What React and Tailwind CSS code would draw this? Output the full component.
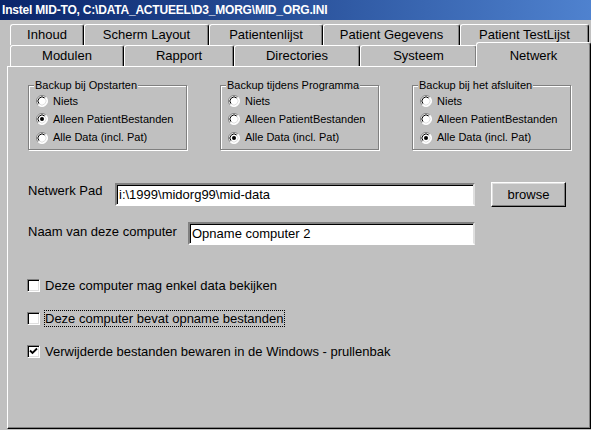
import React from "react";

const row1 = [
  { label: "Inhoud", w: "w-[74px]" },
  { label: "Scherm Layout", w: "w-[125px]" },
  { label: "Patientenlijst", w: "w-[114px]" },
  { label: "Patient Gegevens", w: "w-[137px]" },
  { label: "Patient TestLijst", w: "w-[129px]" },
];

const row2 = [
  { label: "Modulen", w: "w-[114px]" },
  { label: "Rapport", w: "w-[110px]" },
  { label: "Directories", w: "w-[126px]" },
  { label: "Systeem", w: "w-[117px]" },
];

const groups = [
  { title: "Backup bij Opstarten", checked: 1 },
  { title: "Backup tijdens Programma", checked: 2 },
  { title: "Backup bij het afsluiten", checked: 2 },
];

const options = ["Niets", "Alleen PatientBestanden", "Alle Data (incl. Pat)"];

function Tab({ label, w }) {
  return (
    <div
      className={`${w} h-[21px] flex items-center justify-center text-[13px] text-black border-t border-l border-r border-t-white border-l-white border-r-black rounded-t-[3px] shadow-[inset_-1px_0_0_#808080] bg-[#c0c0c0]`}
    >
      {label}
    </div>
  );
}

function Radio({ on }) {
  return (
    <svg width="12" height="12" viewBox="0 0 12 12" className="shrink-0">
      <circle cx="6" cy="6" r="5.5" fill="#fff" />
      <path d="M2.11 9.89A5.5 5.5 0 0 1 9.89 2.11" fill="none" stroke="#808080" strokeWidth="1" />
      <path d="M9.89 2.11A5.5 5.5 0 0 1 2.11 9.89" fill="none" stroke="#fff" strokeWidth="1" />
      <path d="M3.17 8.83A4 4 0 0 1 8.83 3.17" fill="none" stroke="#000" strokeWidth="1" />
      <path d="M8.83 3.17A4 4 0 0 1 3.17 8.83" fill="none" stroke="#dfdfdf" strokeWidth="1" />
      {on && <circle cx="6" cy="6" r="2" fill="#000" />}
    </svg>
  );
}

function Checkbox({ on }) {
  return (
    <div className="w-[13px] h-[13px] shrink-0 bg-white border border-t-[#808080] border-l-[#808080] border-b-white border-r-white shadow-[inset_1px_1px_0_#000,inset_-1px_-1px_0_#dfdfdf] flex items-center justify-center">
      {on && (
        <svg width="9" height="9" viewBox="0 0 9 9">
          <path d="M1 3.5 L3.5 6 L8 1.5" fill="none" stroke="#000" strokeWidth="1.8" />
        </svg>
      )}
    </div>
  );
}

function GroupBox({ title, checked }) {
  return (
    <div className="relative w-[159px] h-[65px] border border-[#808080] shadow-[inset_1px_1px_0_#fff,1px_1px_0_#fff] pt-[6px] pl-[7px]">
      <span className="absolute -top-[8px] left-[5px] px-[1px] bg-[#c0c0c0] text-[11px] leading-[14px]">
        {title}
      </span>
      {options.map((o, i) => (
        <div key={o} className={`flex items-center gap-[5px] ${i === 2 ? "h-[19px]" : "h-[18px]"} text-[11px]`}>
          <Radio on={i === checked} />
          <span>{o}</span>
        </div>
      ))}
    </div>
  );
}

function TextBox({ value, w }) {
  return (
    <div
      className={`${w} h-[23px] bg-white border-2 border-t-[#808080] border-l-[#808080] border-b-white border-r-[#dfdfdf] shadow-[inset_1px_1px_0_#000] flex items-center pl-[2px] text-[13px] leading-none`}
    >
      {value}
    </div>
  );
}

export default function App() {
  return (
    <div className="w-[591px] h-[430px] bg-[#c0c0c0] overflow-hidden flex flex-col font-['Liberation_Sans',Arial,sans-serif] text-black">
      {/* title bar */}
      <div className="h-[20px] shrink-0 bg-gradient-to-r from-[#0a246a] to-[#4f82cf] flex items-center pl-[2px] text-white font-bold text-[12px] tracking-[-0.2px]">
        Instel MID-TO, C:\DATA_ACTUEEL\D3_MORG\MID_ORG.INI
      </div>

      {/* tabs */}
      <div className="pt-[4px] pl-[10px]">
        <div className="flex">
          {row1.map((t) => (
            <Tab key={t.label} {...t} />
          ))}
        </div>
        <div className="flex items-end h-[21px]">
          {row2.map((t) => (
            <Tab key={t.label} {...t} />
          ))}
          <div className="relative z-10 w-[115px] h-[25px] -mb-[1px] -ml-[1px] bg-[#c0c0c0] border-t border-l border-r border-t-white border-l-white border-r-black rounded-t-[3px] shadow-[inset_-1px_0_0_#808080] flex justify-center pt-[3px] text-[13px]">
            Netwerk
          </div>
        </div>
      </div>

      {/* panel */}
      <div className="ml-[7px] w-[584px] h-[363px] border border-t-white border-l-white border-r-black border-b-black shadow-[inset_-1px_-1px_0_#808080] pl-[20px]">
        <div className="flex gap-[33px] mt-[18px]">
          {groups.map((g) => (
            <GroupBox key={g.title} {...g} />
          ))}
        </div>

        <div className="flex items-start mt-[32px] h-[25px] text-[13px]">
          <span className="w-[87px] leading-[15px] mt-[1px]">Netwerk Pad</span>
          <div className="mt-[1px]">
            <TextBox value="i:\1999\midorg99\mid-data" w="w-[360px]" />
          </div>
          <button className="ml-[16px] w-[75px] h-[25px] bg-[#c0c0c0] border border-t-white border-l-white border-r-black border-b-black shadow-[inset_-1px_-1px_0_#808080,inset_1px_1px_0_#dfdfdf] text-[13px]">
            browse
          </button>
        </div>

        <div className="flex items-start mt-[15px] text-[13px]">
          <span className="w-[160px] leading-[15px] mt-[2px]">Naam van deze computer</span>
          <TextBox value="Opname computer 2" w="w-[287px]" />
        </div>

        <div className="flex flex-col gap-[16px] mt-[32px] -ml-[1px] text-[13px]">
          {[
            { t: "Deze computer mag enkel data bekijken", on: false, focus: false },
            { t: "Deze computer bevat opname bestanden", on: false, focus: true },
            { t: "Verwijderde bestanden bewaren in de Windows - prullenbak", on: true, focus: false },
          ].map((c) => (
            <div key={c.t} className="flex items-center h-[17px]">
              <Checkbox on={c.on} />
              <span
                className={`ml-[4px] border leading-[15px] ${c.focus ? "border-dotted border-black" : "border-transparent"}`}
              >
                {c.t}
              </span>
            </div>
          ))}
        </div>
      </div>
    </div>
  );
}
